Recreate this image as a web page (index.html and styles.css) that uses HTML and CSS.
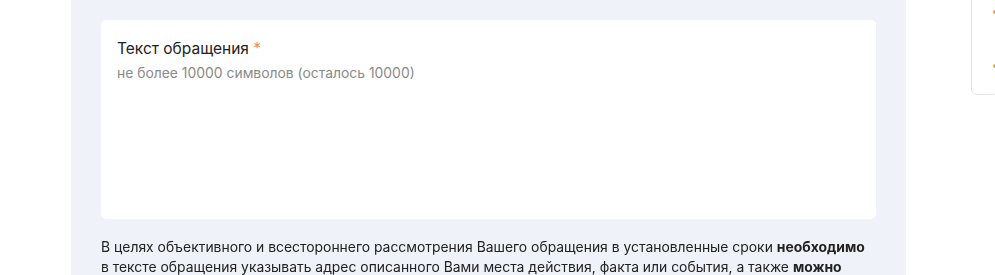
FILE: index.html
```html
<!DOCTYPE html>
<html lang="ru">
<head>
    <meta charset="UTF-8">
    <title>Обращение</title>
    <link rel="stylesheet" href="styles.css">
</head>
<body>

<div class="page">
    <div class="form-panel">
        <div class="field-card">
            <label class="field-label" for="message">Текст обращения <span class="req">*</span></label>
            <textarea id="message" class="field-input" placeholder="не более 10000 символов (осталось 10000)" autofocus></textarea>
        </div>
        <p class="note">
            В целях объективного и всестороннего рассмотрения Вашего обращения в установленные сроки <b>необходимо</b><br>
            в тексте обращения указывать адрес описанного Вами места действия, факта или события, а также <b>можно</b><br>
            приложить к обращению документы и материалы в электронной форме.
        </p>
    </div>

    <aside class="side">
        <div class="side-card">
            <div class="side-item"><span class="dot"></span></div>
            <div class="side-item"><span class="dot"></span></div>
        </div>
    </aside>
</div>

</body>
</html>
```

FILE: styles.css
```css
body {
    margin: 0;
    padding: 0;
    background-color: #fff;
    font-family: 'Inter', 'Open Sans', sans-serif;
    color: #222;
    overflow: hidden;
}
.page {
    display: flex;
    padding-left: 71px;
    height: 275px;
}
.form-panel {
    width: 775px;
    flex-shrink: 0;
    background-color: #eff2f9;
    padding: 20px 30px 0 30px;
}
.field-card {
    background-color: #fff;
    border-radius: 5px;
    height: 199px;
    padding: 18px 16px 0 16px;
    box-sizing: border-box;
    display: flex;
    flex-direction: column;
}
.field-label {
    font-size: 15.5px;
    color: #222;
    line-height: 22px;
}
.req {
    color: #f08a5d;
}
.field-input {
    border: none;
    outline: none;
    resize: none;
    padding: 0;
    margin-top: 3px;
    font-family: inherit;
    font-size: 13.9px;
    line-height: 20px;
    color: #222;
    flex: 1;
    caret-color: #222;
}
.field-input::placeholder {
    color: #8a8a8a;
}
.note {
    margin: 18px 0 0 0;
    font-size: 13.9px;
    line-height: 20px;
    color: #222;
    white-space: nowrap;
}
.note b {
    font-weight: 700;
}
.side {
    margin-left: 65px;
    flex: 1;
}
.side-card {
    margin-top: -10px;
    height: 105px;
    border: 1px solid #e3e5ea;
    border-radius: 6px;
    box-sizing: border-box;
    padding: 19px 0 0 21px;
}
.side-item {
    height: 54px;
}
.dot {
    display: block;
    width: 4px;
    height: 4px;
    border-radius: 50%;
    background-color: #e8a33a;
}
```
